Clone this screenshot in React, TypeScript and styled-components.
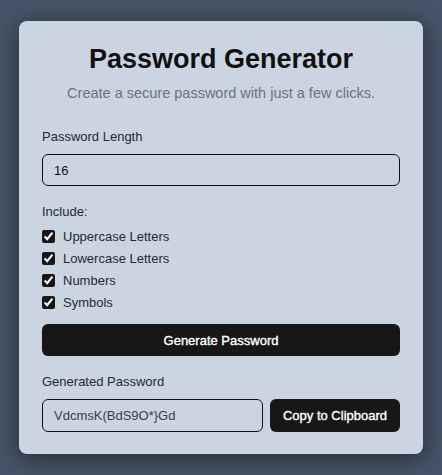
import React, { useState } from "react";
import styled, { createGlobalStyle } from "styled-components";

const GlobalStyle = createGlobalStyle`
  html, body {
    margin: 0;
    padding: 0;
    background-color: #465468;
    font-family: "Liberation Sans", Arial, sans-serif;
  }
`;

const options = [
  { key: "upper", label: "Uppercase Letters" },
  { key: "lower", label: "Lowercase Letters" },
  { key: "numbers", label: "Numbers" },
  { key: "symbols", label: "Symbols" },
];

export default function App() {
  const [length, setLength] = useState("16");
  const [checked, setChecked] = useState<Record<string, boolean>>({
    upper: true,
    lower: true,
    numbers: true,
    symbols: true,
  });

  return (
    <>
      <GlobalStyle />
      <Page>
        <Card>
          <Title>Password Generator</Title>
          <Subtitle>Create a secure password with just a few clicks.</Subtitle>

          <Field $space={18}>
            <Label>Password Length</Label>
            <TextInput
              value={length}
              onChange={(e) => setLength(e.target.value)}
            />
          </Field>

          <Field $space={14}>
            <Label>Include:</Label>
            <CheckList>
              {options.map((opt) => (
                <CheckRow key={opt.key}>
                  <Checkbox
                    type="checkbox"
                    checked={checked[opt.key]}
                    onChange={() =>
                      setChecked({ ...checked, [opt.key]: !checked[opt.key] })
                    }
                  />
                  {opt.label}
                </CheckRow>
              ))}
            </CheckList>
          </Field>

          <PrimaryButton>Generate Password</PrimaryButton>

          <Field $space={0}>
            <Label>Generated Password</Label>
            <OutputRow>
              <TextInput readOnly value={"VdcmsK(BdS9O*}Gd"} $tall $muted />
              <CopyButton>Copy to Clipboard</CopyButton>
            </OutputRow>
          </Field>
        </Card>
      </Page>
    </>
  );
}

const Page = styled.div`
  min-height: 100vh;
  display: flex;
  align-items: center;
  justify-content: center;
`;

const Card = styled.div`
  width: 404px;
  box-sizing: border-box;
  padding: 23px 23px 22px;
  background-color: #cbd5e1;
  border-radius: 8px;
  box-shadow: 0 4px 24px rgba(0, 0, 0, 0.5);
  display: flex;
  flex-direction: column;
`;

const Title = styled.h1`
  margin: 0;
  text-align: center;
  font-size: 27px;
  font-weight: 700;
  color: #111111;
`;

const Subtitle = styled.p`
  margin: 10px 0 28px;
  text-align: center;
  font-size: 14.5px;
  color: #6b7280;
`;

const Field = styled.div<{ $space: number }>`
  display: flex;
  flex-direction: column;
  margin-bottom: ${(p) => p.$space}px;
`;

const Label = styled.label`
  font-size: 13px;
  color: #1f2937;
  margin-bottom: 10px;
`;

const TextInput = styled.input<{ $muted?: boolean; $tall?: boolean }>`
  flex: 1 1 auto;
  min-width: 0;
  height: ${(p) => (p.$tall ? "33px" : "32px")};
  box-sizing: border-box;
  padding: 0 11px;
  border: 1px solid #111111;
  border-radius: 6px;
  background: transparent;
  font-family: "Liberation Sans", Arial, sans-serif;
  font-size: 13px;
  color: ${(p) => (p.$muted ? "#374151" : "#111111")};
  outline: none;
`;

const CheckList = styled.div`
  display: flex;
  flex-direction: column;
  gap: 7px;
`;

const CheckRow = styled.label`
  display: flex;
  align-items: center;
  gap: 8px;
  font-size: 13px;
  color: #1f2937;
`;

const Checkbox = styled.input`
  width: 13px;
  height: 13px;
  margin: 0;
  accent-color: #171717;
`;

const PrimaryButton = styled.button`
  height: 32px;
  margin: 0 0 18px;
  border: none;
  border-radius: 6px;
  background-color: #171717;
  color: #ffffff;
  font-family: "Liberation Sans", Arial, sans-serif;
  font-size: 13px;
  font-weight: 400;
  -webkit-text-stroke: 0.35px #ffffff;
  cursor: pointer;
`;

const OutputRow = styled.div`
  display: flex;
  gap: 7px;
`;

const CopyButton = styled.button`
  height: 33px;
  padding: 0 13px;
  border: none;
  border-radius: 6px;
  background-color: #171717;
  color: #ffffff;
  font-family: "Liberation Sans", Arial, sans-serif;
  font-size: 13px;
  font-weight: 400;
  -webkit-text-stroke: 0.35px #ffffff;
  cursor: pointer;
  white-space: nowrap;
`;
